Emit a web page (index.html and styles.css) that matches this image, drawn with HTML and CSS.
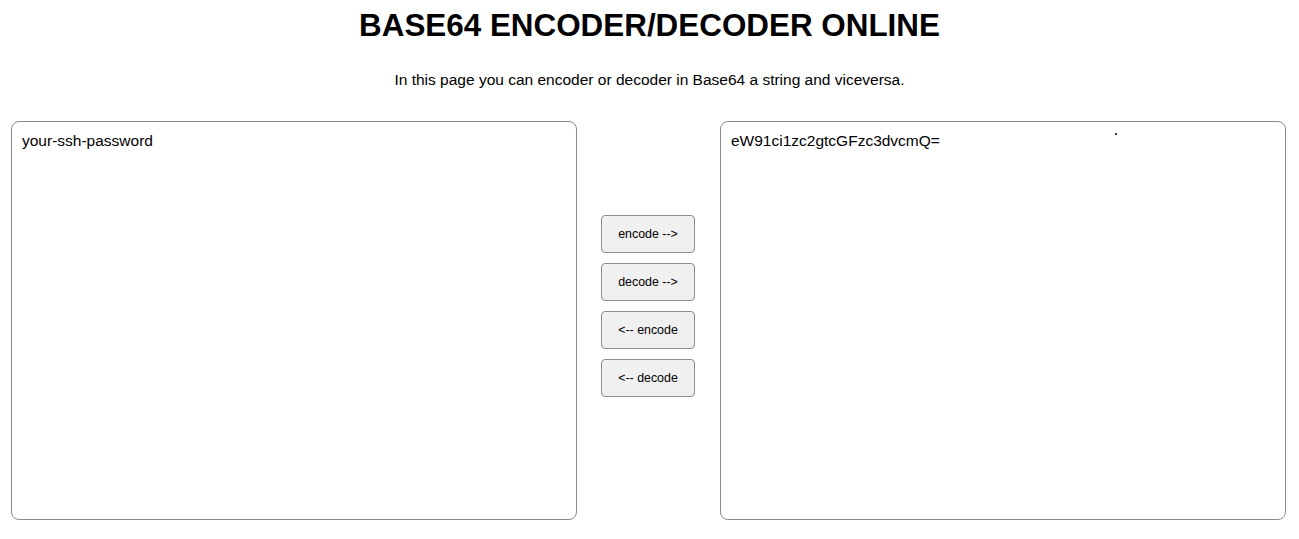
FILE: index.html
```html
<!DOCTYPE html>
<html>
<head>
<meta charset="utf-8">
<title>Base64 Encoder/Decoder Online</title>
<link rel="stylesheet" href="styles.css">
</head>
<body>
<h1 class="title">BASE64 ENCODER/DECODER ONLINE</h1>
<p class="intro">In this page you can encoder or decoder in Base64 a string and viceversa.</p>
<div class="tool">
  <textarea class="box">your-ssh-password</textarea>
  <div class="actions">
    <button class="btn">encode --&gt;</button>
    <button class="btn">decode --&gt;</button>
    <button class="btn">&lt;-- encode</button>
    <button class="btn">&lt;-- decode</button>
  </div>
  <div class="box-wrap">
    <textarea class="box">eW91ci1zc2gtcGFzc3dvcmQ=</textarea>
    <span class="dot"></span>
  </div>
</div>
</body>
</html>
```
FILE: styles.css
```css
html, body {
  margin: 0;
  padding: 0;
  background: #ffffff;
}
body {
  font-family: "Liberation Sans", Arial, sans-serif;
  color: #000;
}
.title {
  margin: 0;
  padding-top: 8px;
  font-size: 31.4px;
  font-weight: bold;
  text-align: center;
  line-height: 36px;
}
.intro {
  margin: 26px 0 0;
  font-size: 15.5px;
  line-height: 19px;
  text-align: center;
}
.tool {
  display: flex;
  justify-content: flex-start;
  align-items: flex-start;
  padding-left: 11px;
  margin-top: 32px;
}
.box-wrap {
  position: relative;
  width: 566px;
  height: 399px;
}
.box {
  box-sizing: border-box;
  width: 566px;
  height: 399px;
  margin: 0;
  padding: 10px 10px;
  border: 1px solid #8a8a8a;
  border-radius: 8px;
  resize: none;
  font-family: "Liberation Sans", Arial, sans-serif;
  font-size: 15.5px;
  line-height: 18px;
  color: #000;
  background: #fff;
  outline: none;
}
.dot {
  position: absolute;
  left: 395px;
  top: 12px;
  width: 2px;
  height: 2px;
  background: #333;
}
.actions {
  display: flex;
  flex-direction: column;
  gap: 10px;
  margin: 94px 25px 0 24px;
  width: 94px;
}
.btn {
  box-sizing: border-box;
  width: 94px;
  height: 38px;
  margin: 0;
  padding: 0;
  border: 1px solid #8c8c8c;
  border-radius: 4px;
  background: #f0f0f0;
  font-family: "Liberation Sans", Arial, sans-serif;
  font-size: 12.4px;
  color: #000;
}
```
